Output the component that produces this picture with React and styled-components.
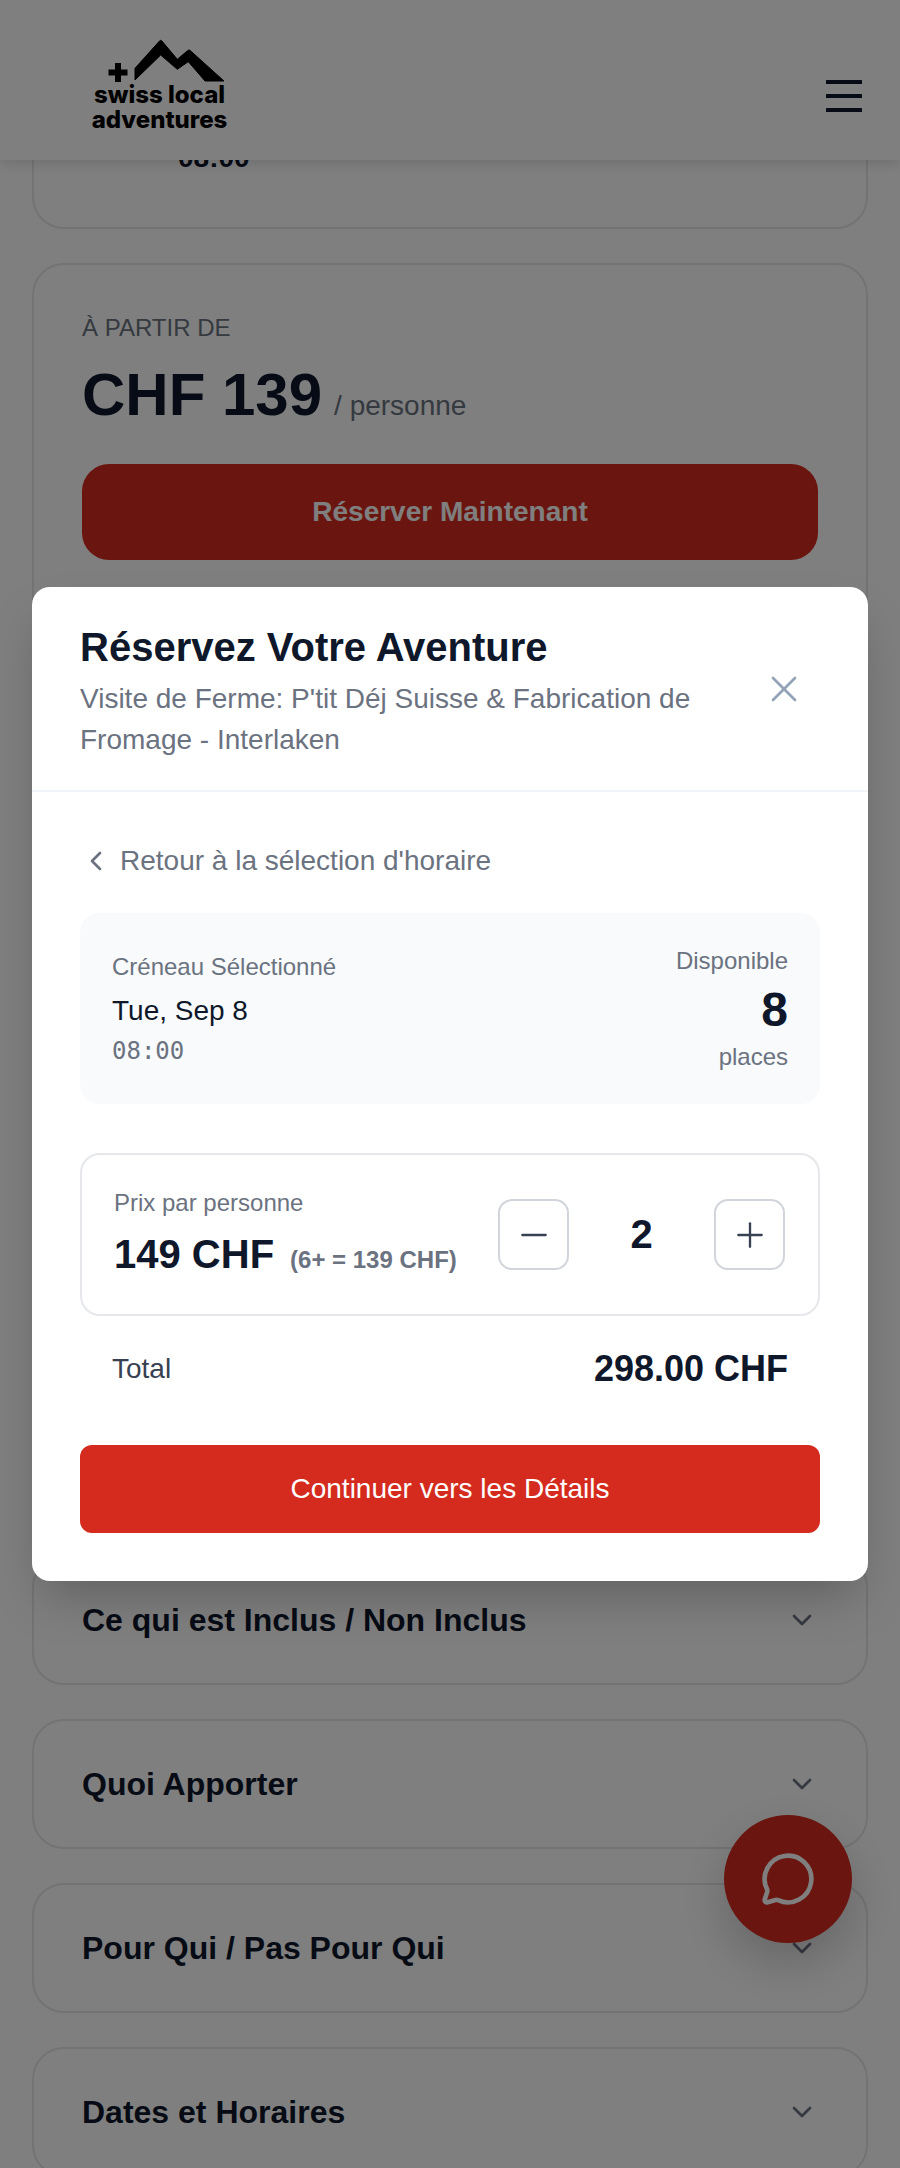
import React from "react";
import styled, { createGlobalStyle } from "styled-components";
import { ChevronDown, ChevronLeft, MessageCircle, Minus, Plus, X } from "lucide-react";

const GlobalStyle = createGlobalStyle`
  html, body {
    margin: 0;
    padding: 0;
    background: #fff;
    font-family: "Liberation Sans", Arial, sans-serif;
    color: #0f172a;
  }
  * { box-sizing: border-box; }
`;

const Page = styled.div`
  position: relative;
  height: 2168px;
  overflow: hidden;
`;

const Header = styled.header`
  position: absolute;
  top: 0;
  left: 0;
  right: 0;
  height: 160px;
  z-index: 20;
  display: flex;
  align-items: center;
  justify-content: space-between;
  padding: 0 38px 0 92px;
  background: #fff;
  box-shadow: 0 4px 12px rgba(0, 0, 0, 0.12);
`;

const Logo = styled.div`
  display: flex;
  flex-direction: column;
  align-items: center;
  width: 135px;
  margin-top: 10px;
`;

const LogoMountains = styled.svg`
  flex: none;
  margin-left: 11px;
`;

const LogoText = styled.span`
  font-family: Inter, sans-serif;
  font-weight: 800;
  font-size: 24px;
  line-height: 25px;
  color: #000;
  white-space: nowrap;
`;

const MenuGlyph = styled.svg`
  margin-top: 31px;
`;

const Content = styled.main`
  display: flex;
  flex-direction: column;
  gap: 34px;
  padding: 100px 32px 0;
`;

const Card = styled.section`
  flex: none;
  height: ${(p) => p.$height}px;
  border: 2px solid #e5e7eb;
  border-radius: 32px;
  background: #fff;
`;

const ScheduleCard = styled(Card)`
  padding: 42px 0 0 144px;
`;

const ScheduleTime = styled.div`
  font-size: 28px;
  line-height: 28px;
  font-weight: 700;
`;

const PriceCard = styled(Card)`
  padding: 47px 48px 0;
`;

const FromLabel = styled.div`
  font-size: 24px;
  line-height: 32px;
  color: #6b7280;
`;

const PriceRow = styled.div`
  display: flex;
  align-items: baseline;
  gap: 12px;
  margin-top: 15px;
`;

const PriceValue = styled.span`
  font-size: 60px;
  line-height: 72px;
  font-weight: 700;
`;

const PriceUnit = styled.span`
  font-size: 28px;
  color: #6b7280;
`;

const BookButton = styled.div`
  display: flex;
  align-items: center;
  justify-content: center;
  height: 96px;
  margin-top: 33px;
  border-radius: 27px;
  background: #d52b1e;
  color: #fff;
  font-size: 28px;
  font-weight: 700;
`;

const AccordionCard = styled(Card)`
  display: flex;
  align-items: center;
  justify-content: space-between;
  padding: 0 48px;
`;

const AccordionTitle = styled.h3`
  margin: 0;
  font-size: 32px;
  font-weight: 700;
`;

const Fab = styled.div`
  position: absolute;
  right: 48px;
  bottom: 225px;
  width: 128px;
  height: 128px;
  z-index: 25;
  display: flex;
  align-items: center;
  justify-content: center;
  border-radius: 50%;
  background: #d52b1e;
  color: #fff;
  box-shadow: 0 20px 50px rgba(0, 0, 0, 0.2);
`;

const Backdrop = styled.div`
  position: absolute;
  inset: 0;
  z-index: 30;
  display: flex;
  align-items: center;
  justify-content: center;
  padding: 32px;
  background: rgba(0, 0, 0, 0.5);
`;

const Modal = styled.div`
  width: 100%;
  border-radius: 18px;
  background: #fff;
  box-shadow: 0 25px 50px -12px rgba(0, 0, 0, 0.25);
`;

const ModalHead = styled.div`
  display: flex;
  align-items: center;
  gap: 24px;
  padding: 36px 62px 30px 48px;
  border-bottom: 2px solid #f1f5f9;
`;

const HeadText = styled.div`
  flex: 1;
`;

const ModalTitle = styled.h2`
  margin: 0 0 7px;
  font-size: 40px;
  line-height: 48px;
  font-weight: 700;
`;

const ModalSub = styled.p`
  margin: 0;
  font-size: 28px;
  line-height: 41px;
  color: #6b7280;
`;

const CloseIcon = styled(X)`
  flex: none;
  margin-top: -5px;
  color: #94a3b8;
`;

const ModalBody = styled.div`
  padding: 49px 48px 48px;
`;

const BackRow = styled.div`
  display: flex;
  align-items: center;
  gap: 8px;
  font-size: 28px;
  line-height: 40px;
  color: #6b7280;
`;

const BackChevron = styled(ChevronLeft)`
  flex: none;
`;

const SlotBox = styled.div`
  display: flex;
  align-items: center;
  justify-content: space-between;
  height: 191px;
  margin-top: 32px;
  padding: 0 32px;
  border-radius: 20px;
  background: #f8fafc;
`;

const SlotSide = styled.div`
  display: flex;
  flex-direction: column;
  align-items: ${(p) => (p.$right ? "flex-end" : "flex-start")};
`;

const SlotLabel = styled.div`
  font-size: 24px;
  line-height: 36px;
  color: #6b7280;
`;

const SlotDate = styled.div`
  margin: 5px 0 1px;
  font-size: 28px;
  line-height: 42px;
`;

const SlotTime = styled.div`
  font-family: "DejaVu Sans Mono", monospace;
  font-size: 24px;
  line-height: 36px;
  color: #6b7280;
`;

const SlotCount = styled.div`
  margin: 3px 0 1px;
  font-size: 48px;
  line-height: 56px;
  font-weight: 700;
`;

const QuantityCard = styled.div`
  display: flex;
  align-items: center;
  justify-content: space-between;
  height: 163px;
  margin-top: 49px;
  padding: 0 33px 0 32px;
  border: 2px solid #e5e7eb;
  border-radius: 20px;
`;

const QuantityPrice = styled.div`
  display: flex;
  align-items: baseline;
  gap: 16px;
  margin-top: 3px;
`;

const UnitPrice = styled.span`
  font-size: 40px;
  line-height: 60px;
  font-weight: 700;
`;

const TierNote = styled.span`
  font-size: 24px;
  font-weight: 700;
  color: #6b7280;
`;

const Stepper = styled.div`
  display: flex;
  align-items: center;
`;

const StepButton = styled.div`
  display: flex;
  align-items: center;
  justify-content: center;
  width: 71px;
  height: 71px;
  border: 2px solid #d1d5db;
  border-radius: 14px;
  color: #374151;
`;

const Quantity = styled.div`
  width: 145px;
  text-align: center;
  font-size: 40px;
  font-weight: 700;
`;

const TotalRow = styled.div`
  display: flex;
  align-items: center;
  justify-content: space-between;
  height: 50px;
  margin-top: 28px;
  padding: 0 32px;
`;

const TotalLabel = styled.span`
  font-size: 28px;
  color: #374151;
`;

const TotalValue = styled.span`
  font-size: 36px;
  font-weight: 700;
`;

const ContinueButton = styled.div`
  display: flex;
  align-items: center;
  justify-content: center;
  height: 88px;
  margin-top: 51px;
  border-radius: 12px;
  background: #d52b1e;
  color: #fff;
  font-size: 28px;
`;

const sections = ["Ce qui est Inclus / Non Inclus", "Quoi Apporter", "Pour Qui / Pas Pour Qui", "Dates et Horaires"];

const LogoMark = () => (
  <LogoMountains width="120" height="44" viewBox="0 0 120 44" fill="#000">
    <path d="M3.5 31.5H10V25h6v6.5h6.5v6H16V44h-6v-6.5H3.5z" />
    <path
      d="M30 42V30.3L54.5 3q1.2-1.4 2.4 0L72.3 21.3 82.8 12.5q1.2-1.2 2.4 0L119 43H100L83.3 23.7 72.3 31.3 55.7 17z"
      stroke="#000"
      strokeWidth="1"
      strokeLinejoin="round"
    />
  </LogoMountains>
);

const MenuIcon = () => (
  <MenuGlyph width="36" height="32" viewBox="0 0 36 32" fill="#0f172a">
    <rect y="0" width="36" height="4" rx="0.5" />
    <rect y="14" width="36" height="4" rx="0.5" />
    <rect y="28" width="36" height="4" rx="0.5" />
  </MenuGlyph>
);

const App = () => {
  return (
    <Page>
      <GlobalStyle />
      <Header>
        <Logo>
          <LogoMark />
          <LogoText>swiss local</LogoText>
          <LogoText>adventures</LogoText>
        </Logo>
        <MenuIcon />
      </Header>
      <Content>
        <ScheduleCard $height={129}>
          <ScheduleTime>08:00</ScheduleTime>
        </ScheduleCard>
        <PriceCard $height={1258}>
          <FromLabel>À PARTIR DE</FromLabel>
          <PriceRow>
            <PriceValue>CHF 139</PriceValue>
            <PriceUnit>/ personne</PriceUnit>
          </PriceRow>
          <BookButton>Réserver Maintenant</BookButton>
        </PriceCard>
        {sections.map((title) => (
          <AccordionCard key={title} $height={130}>
            <AccordionTitle>{title}</AccordionTitle>
            <ChevronDown size={32} color="#6b7280" strokeWidth={2} />
          </AccordionCard>
        ))}
      </Content>
      <Fab>
        <MessageCircle size={56} strokeWidth={2} />
      </Fab>
      <Backdrop>
        <Modal>
          <ModalHead>
            <HeadText>
              <ModalTitle>Réservez Votre Aventure</ModalTitle>
              <ModalSub>Visite de Ferme: P'tit Déj Suisse &amp; Fabrication de Fromage - Interlaken</ModalSub>
            </HeadText>
            <CloseIcon size={44} strokeWidth={1.5} />
          </ModalHead>
          <ModalBody>
            <BackRow>
              <BackChevron size={32} strokeWidth={2} />
              Retour à la sélection d'horaire
            </BackRow>
            <SlotBox>
              <SlotSide>
                <SlotLabel>Créneau Sélectionné</SlotLabel>
                <SlotDate>Tue, Sep 8</SlotDate>
                <SlotTime>08:00</SlotTime>
              </SlotSide>
              <SlotSide $right>
                <SlotLabel>Disponible</SlotLabel>
                <SlotCount>8</SlotCount>
                <SlotLabel>places</SlotLabel>
              </SlotSide>
            </SlotBox>
            <QuantityCard>
              <div>
                <SlotLabel>Prix par personne</SlotLabel>
                <QuantityPrice>
                  <UnitPrice>149 CHF</UnitPrice>
                  <TierNote>(6+ = 139 CHF)</TierNote>
                </QuantityPrice>
              </div>
              <Stepper>
                <StepButton>
                  <Minus size={40} strokeWidth={1.4} />
                </StepButton>
                <Quantity>2</Quantity>
                <StepButton>
                  <Plus size={40} strokeWidth={1.4} />
                </StepButton>
              </Stepper>
            </QuantityCard>
            <TotalRow>
              <TotalLabel>Total</TotalLabel>
              <TotalValue>298.00 CHF</TotalValue>
            </TotalRow>
            <ContinueButton>Continuer vers les Détails</ContinueButton>
          </ModalBody>
        </Modal>
      </Backdrop>
    </Page>
  );
};

export default App;
